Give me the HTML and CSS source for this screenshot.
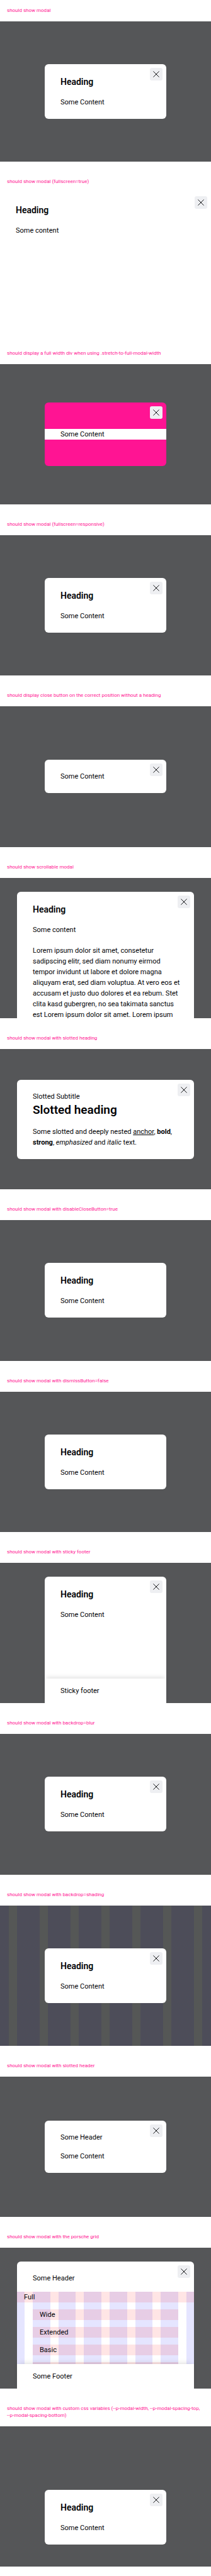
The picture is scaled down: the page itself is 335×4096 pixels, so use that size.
FILE: index.html
```html
<!DOCTYPE html>
<html lang="en">
<head>
<meta charset="utf-8">
<meta name="viewport" content="width=device-width, initial-scale=1">
<title>Modal overview</title>
<link rel="stylesheet" href="styles.css">
</head>
<body>
<svg class="sprite" aria-hidden="true">
  <symbol id="close" viewBox="0 0 10 10"><path d="M0.4 0.4L9.6 9.6M9.6 0.4L0.4 9.6" fill="none" stroke="currentColor" stroke-width="0.9"/></symbol>
</svg>
<main>
  <section class="case">
    <h2 class="label">should show modal</h2>
    <div class="stage">
      <div class="modal" role="dialog">
        <button class="close" type="button" aria-label="Close"><svg class="icon"><use href="#close"/></svg></button>
        <h3 class="heading">Heading</h3>
        <p class="text">Some Content</p>
      </div>
    </div>
  </section>

  <section class="case">
    <h2 class="label">should show modal (fullscreen=true)</h2>
    <div class="stage stage-fullscreen">
      <div class="modal modal-fullscreen" role="dialog">
        <button class="close" type="button" aria-label="Close"><svg class="icon"><use href="#close"/></svg></button>
        <h3 class="heading">Heading</h3>
        <p class="text">Some content</p>
      </div>
    </div>
  </section>

  <section class="case">
    <h2 class="label">should display a full width div when using .stretch-to-full-modal-width</h2>
    <div class="stage">
      <div class="modal modal-stretch" role="dialog">
        <button class="close" type="button" aria-label="Close"><svg class="icon"><use href="#close"/></svg></button>
        <p class="text stretch">Some Content</p>
      </div>
    </div>
  </section>

  <section class="case">
    <h2 class="label">should show modal (fullscreen=responsive)</h2>
    <div class="stage">
      <div class="modal" role="dialog">
        <button class="close" type="button" aria-label="Close"><svg class="icon"><use href="#close"/></svg></button>
        <h3 class="heading">Heading</h3>
        <p class="text">Some Content</p>
      </div>
    </div>
  </section>

  <section class="case">
    <h2 class="label">should display close button on the correct position without a heading</h2>
    <div class="stage">
      <div class="modal" role="dialog">
        <button class="close" type="button" aria-label="Close"><svg class="icon"><use href="#close"/></svg></button>
        <p class="text">Some Content</p>
      </div>
    </div>
  </section>

  <section class="case">
    <h2 class="label">should show scrollable modal</h2>
    <div class="stage stage-tall">
      <div class="modal modal-wide modal-tall" role="dialog">
        <button class="close" type="button" aria-label="Close"><svg class="icon"><use href="#close"/></svg></button>
        <h3 class="heading">Heading</h3>
        <p class="text">Some content</p>
        <p class="text lorem">Lorem ipsum dolor sit amet, consetetur<br>sadipscing elitr, sed diam nonumy eirmod<br>tempor invidunt ut labore et dolore magna<br>aliquyam erat, sed diam voluptua. At vero eos et<br>accusam et justo duo dolores et ea rebum. Stet<br>clita kasd gubergren, no sea takimata sanctus<br>est Lorem ipsum dolor sit amet. Lorem ipsum</p>
      </div>
    </div>
  </section>

  <section class="case">
    <h2 class="label">should show modal with slotted heading</h2>
    <div class="stage">
      <div class="modal modal-wide" role="dialog">
        <button class="close" type="button" aria-label="Close"><svg class="icon"><use href="#close"/></svg></button>
        <p class="text">Slotted Subtitle</p>
        <h3 class="heading heading-large">Slotted heading</h3>
        <p class="text">Some slotted and deeply nested <a class="anchor" href="#">anchor</a>, <b>bold</b>,<br><strong>strong</strong>, <em>emphasized</em> and <i>italic</i> text.</p>
      </div>
    </div>
  </section>

  <section class="case">
    <h2 class="label">should show modal with disableCloseButton=true</h2>
    <div class="stage">
      <div class="modal" role="dialog">
        <h3 class="heading">Heading</h3>
        <p class="text">Some Content</p>
      </div>
    </div>
  </section>

  <section class="case">
    <h2 class="label">should show modal with dismissButton=false</h2>
    <div class="stage">
      <div class="modal" role="dialog">
        <h3 class="heading">Heading</h3>
        <p class="text">Some Content</p>
      </div>
    </div>
  </section>

  <section class="case">
    <h2 class="label">should show modal with sticky footer</h2>
    <div class="stage stage-tall">
      <div class="modal modal-tall" role="dialog">
        <button class="close" type="button" aria-label="Close"><svg class="icon"><use href="#close"/></svg></button>
        <h3 class="heading">Heading</h3>
        <p class="text body">Some Content</p>
        <footer class="text footer">Sticky footer</footer>
      </div>
    </div>
  </section>

  <section class="case">
    <h2 class="label">should show modal with backdrop=blur</h2>
    <div class="stage">
      <div class="modal" role="dialog">
        <button class="close" type="button" aria-label="Close"><svg class="icon"><use href="#close"/></svg></button>
        <h3 class="heading">Heading</h3>
        <p class="text">Some Content</p>
      </div>
    </div>
  </section>

  <section class="case">
    <h2 class="label">should show modal with backdrop=shading</h2>
    <div class="stage stage-shading">
      <div class="columns columns-stage" aria-hidden="true"><span></span><span></span><span></span><span></span><span></span><span></span><span></span><span></span></div>
      <div class="modal" role="dialog">
        <button class="close" type="button" aria-label="Close"><svg class="icon"><use href="#close"/></svg></button>
        <h3 class="heading">Heading</h3>
        <p class="text">Some Content</p>
      </div>
    </div>
  </section>

  <section class="case">
    <h2 class="label">should show modal with slotted header</h2>
    <div class="stage">
      <div class="modal" role="dialog">
        <button class="close" type="button" aria-label="Close"><svg class="icon"><use href="#close"/></svg></button>
        <header class="text header">Some Header</header>
        <p class="text">Some Content</p>
      </div>
    </div>
  </section>

  <section class="case">
    <h2 class="label">should show modal with the porsche grid</h2>
    <div class="stage stage-tall">
      <div class="modal modal-wide modal-tall" role="dialog">
        <button class="close" type="button" aria-label="Close"><svg class="icon"><use href="#close"/></svg></button>
        <header class="text header">Some Header</header>
        <div class="body grid-body">
          <div class="columns columns-modal" aria-hidden="true"><span></span><span></span><span></span><span></span><span></span><span></span><span></span><span></span></div>
          <div class="rows">
            <div class="text row row-full">Full</div>
            <div class="text row">Wide</div>
            <div class="text row">Extended</div>
            <div class="text row">Basic</div>
            <div class="text row"></div>
          </div>
        </div>
        <footer class="text footer">Some Footer</footer>
      </div>
    </div>
  </section>

  <section class="case">
    <h2 class="label">should show modal with custom css variables (--p-modal-width, --p-modal-spacing-top,<br>--p-modal-spacing-bottom)</h2>
    <div class="stage stage-low">
      <div class="modal" role="dialog">
        <button class="close" type="button" aria-label="Close"><svg class="icon"><use href="#close"/></svg></button>
        <h3 class="heading">Heading</h3>
        <p class="text">Some Content</p>
      </div>
    </div>
  </section>
</main>
</body>
</html>
```
FILE: styles.css
```css
* {
  box-sizing: border-box;
}

body {
  margin: 0;
  background: #fff;
  color: #010205;
  font-family: Roboto, "Liberation Sans", sans-serif;
}

.sprite {
  display: none;
}

.case {
  padding-bottom: 15px;
}

.label {
  margin: 0;
  padding: 11px 11px 12px;
  color: #ff1493;
  font-size: 8px;
  font-weight: 400;
  line-height: 11px;
  white-space: nowrap;
}

.stage {
  position: relative;
  display: flex;
  align-items: center;
  justify-content: center;
  aspect-ratio: 3 / 2;
  padding: 0 27px;
  overflow: hidden;
  background: #555658;
}

.stage-fullscreen {
  align-items: stretch;
  padding: 0;
  background: #fff;
}

.stage-tall {
  align-items: stretch;
  padding-top: 22px;
}

.stage-shading {
  background: #555756;
}

.stage-low {
  padding-top: 66px;
}

.modal {
  position: relative;
  display: flex;
  flex-direction: column;
  width: 193px;
  padding: 18px 0;
  border-radius: 6px;
  background: #fff;
}

.modal-wide {
  width: 100%;
}

.modal-fullscreen {
  width: 100%;
  border-radius: 0;
}

.modal-tall {
  min-height: 0;
  padding-bottom: 0;
  border-radius: 6px 6px 0 0;
}

.modal-stretch {
  padding: 42px 0;
  background: #ff1493;
}

.heading {
  margin: 0 0 14px;
  padding: 0 25px;
  font-size: 14px;
  font-weight: 600;
  line-height: 20px;
}

.heading-large {
  margin-bottom: 13px;
  font-size: 19px;
  line-height: 26px;
}

.text {
  margin: 0;
  padding: 0 25px;
  font-size: 11px;
  line-height: 17px;
  white-space: nowrap;
}

.stretch {
  background: #fff;
}

.lorem {
  margin-top: 16px;
}

.anchor {
  color: inherit;
  text-decoration: underline;
}

.header {
  margin-bottom: 13px;
}

.body {
  flex: 1;
  min-height: 0;
}

.footer {
  position: relative;
  padding: 11px 25px;
  background: #fff;
  box-shadow: 0 -4px 8px -3px rgba(0, 0, 0, 0.15);
}

.close {
  position: absolute;
  top: 6px;
  right: 6px;
  z-index: 1;
  display: flex;
  align-items: center;
  justify-content: center;
  width: 20px;
  height: 20px;
  padding: 0;
  border: 0;
  border-radius: 3px;
  background: #eeeff2;
  color: #010205;
}

.icon {
  width: 10px;
  height: 10px;
}

.columns {
  position: absolute;
  inset: 0;
  display: grid;
  column-gap: 13px;
}

.columns-stage {
  grid-template-columns: 14px repeat(6, 1fr) 14px;
}

.columns-stage span {
  background: #4d4d59;
}

.columns-modal {
  grid-template-columns: 12px repeat(6, 1fr) 12px;
}

.columns-modal span {
  background: #e5e5ff;
}

.grid-body {
  position: relative;
  overflow: hidden;
}

.rows {
  position: relative;
  display: grid;
  row-gap: 11px;
}

.row {
  height: 17px;
  margin: 0 25px;
  padding: 0 11px;
  background: rgba(255, 0, 0, 0.1);
}

.row-full {
  margin: 0;
}
```
